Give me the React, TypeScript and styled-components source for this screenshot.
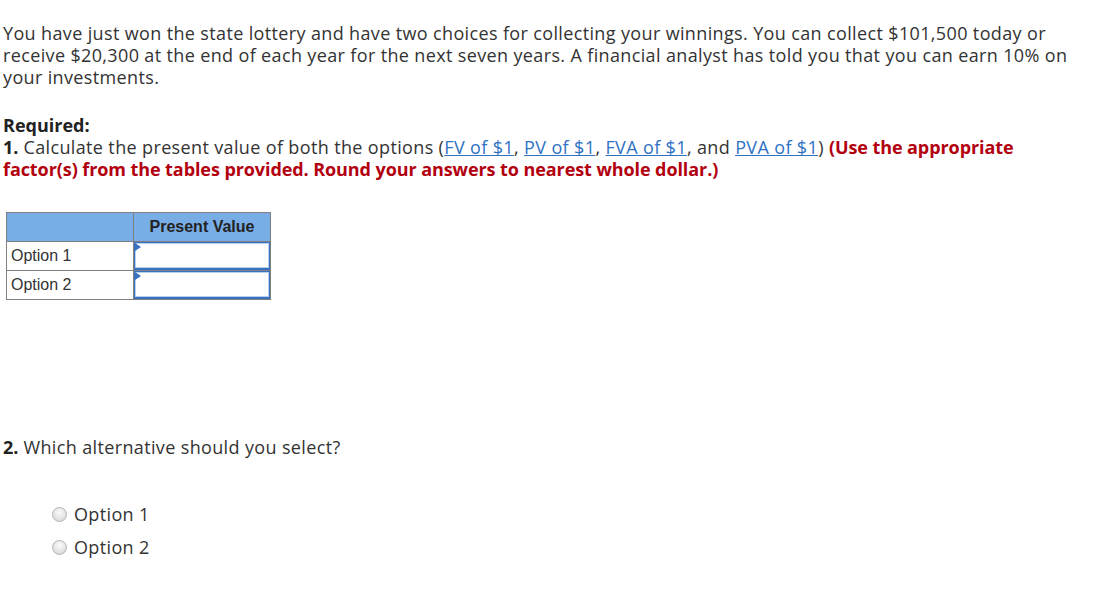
import * as React from 'react';
import styled, { createGlobalStyle } from 'styled-components';

const GlobalStyle = createGlobalStyle`
  body {
    margin: 0;
    background: #ffffff;
    font-family: 'Open Sans', 'Lato', sans-serif;
    color: #333333;
  }
`;

const Page = styled.div`
  padding: 22px 3px 0 3px;
  width: 1085px;
  font-size: 18px;
  line-height: 22px;
  letter-spacing: 0.36px;
`;

const Para = styled.p`
  margin: 0 0 26px 0;
`;

const Block = styled.div`
  margin: 0;
`;

const Strong = styled.b`
  font-weight: 700;
  color: #222222;
  letter-spacing: 0;
`;

const Link = styled.a`
  color: #2f72c4;
  text-decoration: underline;
`;

const Red = styled.b`
  color: #b3000f;
  font-weight: 700;
  letter-spacing: -0.08px;
`;

const Table = styled.table`
  margin: 32px 0 0 3px;
  border-collapse: collapse;
  font-family: 'Liberation Sans', Arial, sans-serif;
  font-size: 16px;
  letter-spacing: 0;
  color: #333333;
`;

const HeadCell = styled.th<{ $w: number }>`
  box-sizing: border-box;
  width: ${(p) => p.$w}px;
  height: 29px;
  padding: 0;
  background: #78ade6;
  border: 1px solid #808080;
  font-weight: 700;
  font-size: 16px;
  color: #222222;
  text-align: center;
  vertical-align: middle;
`;

const LabelCell = styled.td`
  box-sizing: border-box;
  height: 29px;
  padding: 0 0 0 4px;
  border: 1px solid #808080;
  vertical-align: middle;
`;

const InputCell = styled.td`
  box-sizing: border-box;
  height: 29px;
  padding: 0;
  border: 1px solid #808080;
`;

const InputBox = styled.div`
  position: relative;
  box-sizing: border-box;
  height: 28px;
  border: 1px solid #3a72c2;
  border-bottom-width: 2px;
  box-shadow: inset 0 0 0 1px #b7d0f0;
  background: #ffffff;
`;

const Flag = styled.span`
  position: absolute;
  left: 0;
  top: 0;
  width: 0;
  height: 0;
  border-top: 4px solid transparent;
  border-bottom: 4px solid transparent;
  border-left: 6px solid #3a72c2;
`;

const Question = styled.div`
  margin-top: 136px;
`;

const RadioList = styled.div`
  display: flex;
  flex-direction: column;
  gap: 11px;
  margin: 45px 0 0 49px;
`;

const RadioRow = styled.label`
  display: flex;
  align-items: center;
  gap: 7px;
`;

const RadioDot = styled.span`
  box-sizing: border-box;
  width: 15px;
  height: 15px;
  border-radius: 50%;
  border: 1px solid #b4b4b4;
  background: radial-gradient(circle at 50% 35%, #fbfbfb 0%, #e2e2e2 60%, #d2d2d2 100%);
`;

const rows = ['Option 1', 'Option 2'];

export default function App() {
  return (
    <>
      <GlobalStyle />
      <Page>
        <Para>
          You have just won the state lottery and have two choices for collecting your winnings. You can collect
          $101,500 today or receive $20,300 at the end of each year for the next seven years. A financial analyst
          has told you that you can earn 10% on your investments.
        </Para>
        <Block>
          <Strong>Required:</Strong>
          <br />
          <Strong>1.</Strong> Calculate the present value of both the options (<Link>FV of $1</Link>,{' '}
          <Link>PV of $1</Link>, <Link>FVA of $1</Link>, and <Link>PVA of $1</Link>){' '}
          <Red>(Use the appropriate factor(s) from the tables provided. Round your answers to nearest whole dollar.)</Red>
        </Block>
        <Table>
          <thead>
            <tr>
              <HeadCell $w={127} />
              <HeadCell $w={137}>Present Value</HeadCell>
            </tr>
          </thead>
          <tbody>
            {rows.map((r) => (
              <tr key={r}>
                <LabelCell>{r}</LabelCell>
                <InputCell>
                  <InputBox>
                    <Flag />
                  </InputBox>
                </InputCell>
              </tr>
            ))}
          </tbody>
        </Table>
        <Question>
          <Strong>2.</Strong> Which alternative should you select?
        </Question>
        <RadioList>
          {rows.map((r) => (
            <RadioRow key={r}>
              <RadioDot />
              {r}
            </RadioRow>
          ))}
        </RadioList>
      </Page>
    </>
  );
}
